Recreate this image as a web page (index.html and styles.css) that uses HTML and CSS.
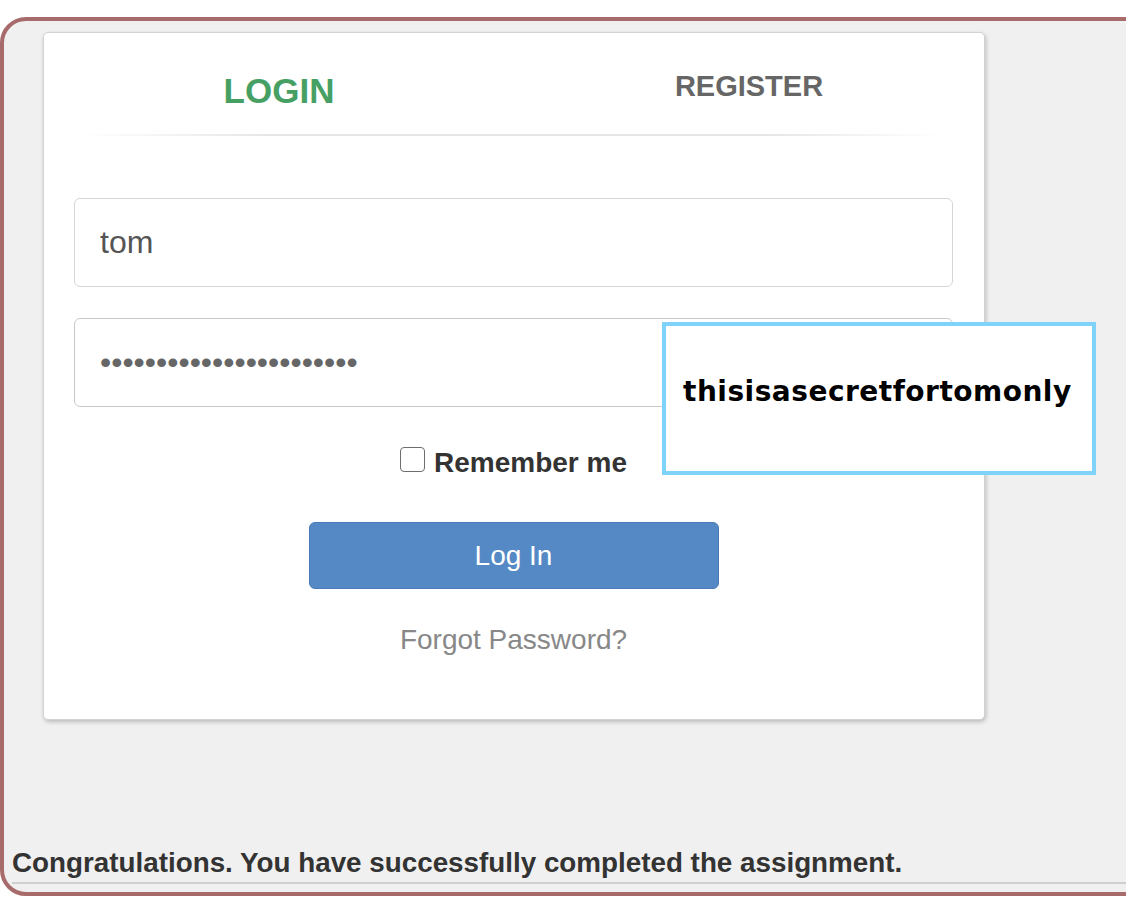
FILE: index.html
```html
<!DOCTYPE html>
<html lang="en">
<head>
<meta charset="utf-8">
<title>Login</title>
<link rel="stylesheet" href="styles.css">
</head>
<body>
<div class="frame">
  <div class="card">
    <div class="tabs">
      <a class="tab tab-active">LOGIN</a>
      <a class="tab">REGISTER</a>
    </div>
    <div class="divider"></div>
    <form class="form">
      <input class="field field-user" type="text" value="tom">
      <div class="field-wrap">
        <input class="field field-pass" type="password" value="thisisasecretfortomonly">
        <div class="tooltip">thisisasecretfortomonly</div>
      </div>
      <label class="remember"><input class="check" type="checkbox"><span>Remember me</span></label>
      <div class="actions"><button class="btn" type="button">Log In</button></div>
      <div class="forgot"><a class="forgot-link">Forgot Password?</a></div>
    </form>
  </div>
  <p class="message">Congratulations. You have successfully completed the assignment.</p>
</div>
</body>
</html>
```

FILE: styles.css
```css
html, body {
  margin: 0;
  padding: 0;
  background: #ffffff;
  overflow: hidden;
  font-family: "Liberation Sans", Arial, sans-serif;
}

.frame {
  margin-top: 17px;
  width: 1160px;
  box-sizing: border-box;
  border: 4px solid #a86b6b;
  border-radius: 26px;
  background: #f0f0f0;
  padding: 11px 0 0 0;
  display: flex;
  flex-direction: column;
  align-items: flex-start;
}

.card {
  width: 942px;
  margin-left: 39px;
  box-sizing: border-box;
  background: #ffffff;
  border: 1px solid #d2d2d2;
  border-radius: 5px;
  box-shadow: 1px 2px 4px rgba(0, 0, 0, 0.22);
}

.tabs {
  display: flex;
  height: 101px;
  align-items: flex-start;
}

.tab {
  flex: 1;
  text-align: center;
  padding-top: 39px;
  line-height: 1;
  font-weight: bold;
  font-size: 29px;
  color: #666666;
  cursor: pointer;
}

.tab-active {
  padding-top: 40px;
  font-size: 35px;
  color: #46a064;
}

.divider {
  height: 2px;
  margin: 0 44px 0 36px;
  background: linear-gradient(to right, rgba(230,230,230,0), #e6e6e6 22%, #e6e6e6 80%, rgba(230,230,230,0));
}

.form {
  margin: 0;
  padding: 62px 31px 63px 30px;
  display: flex;
  flex-direction: column;
}

.field {
  display: block;
  width: 100%;
  height: 89px;
  box-sizing: border-box;
  margin: 0;
  padding: 0 25px;
  border: 1px solid #d6d6d6;
  border-radius: 6px;
  background: #ffffff;
  font-family: "Liberation Sans", Arial, sans-serif;
  font-size: 32px;
  color: #555555;
  outline: none;
}

.field-pass {
  border-color: #c9c9c9;
  color: #666666;
}

.field-wrap {
  position: relative;
  margin-top: 31px;
}

.tooltip {
  position: absolute;
  left: 588px;
  top: 4px;
  width: 434px;
  height: 153px;
  box-sizing: border-box;
  border: 4px solid #80d3f8;
  background: #ffffff;
  padding: 50px 0 0 17px;
  font-family: "DejaVu Sans", "Liberation Sans", sans-serif;
  font-weight: bold;
  font-size: 28px;
  line-height: 32px;
  letter-spacing: 0.5px;
  color: #000000;
  white-space: nowrap;
  z-index: 2;
}

.remember {
  margin-top: 40px;
  display: flex;
  justify-content: center;
  align-items: flex-start;
  gap: 9px;
  font-weight: bold;
  font-size: 28px;
  line-height: 32px;
  color: #333333;
}

.check {
  appearance: none;
  -webkit-appearance: none;
  width: 25px;
  height: 25px;
  margin: 0;
  box-sizing: border-box;
  border: 1.5px solid #6e6e6e;
  border-radius: 4px;
  background: #ffffff;
}

.actions {
  margin-top: 43px;
  display: flex;
  justify-content: center;
}

.btn {
  width: 410px;
  height: 67px;
  box-sizing: border-box;
  border: 1px solid #4a7bb6;
  border-radius: 6px;
  background: #5589c6;
  color: #ffffff;
  font-family: "Liberation Sans", Arial, sans-serif;
  font-size: 28px;
  padding: 0;
}

.forgot {
  margin-top: 35px;
  text-align: center;
  font-size: 28px;
  line-height: 32px;
}

.forgot-link {
  color: #888888;
}

.message {
  margin: 127px 0 8px 8px;
  align-self: stretch;
  padding-bottom: 3px;
  border-bottom: 2px solid #cfcfcf;
  font-weight: bold;
  font-size: 27.8px;
  line-height: 32px;
  color: #333333;
}
```
